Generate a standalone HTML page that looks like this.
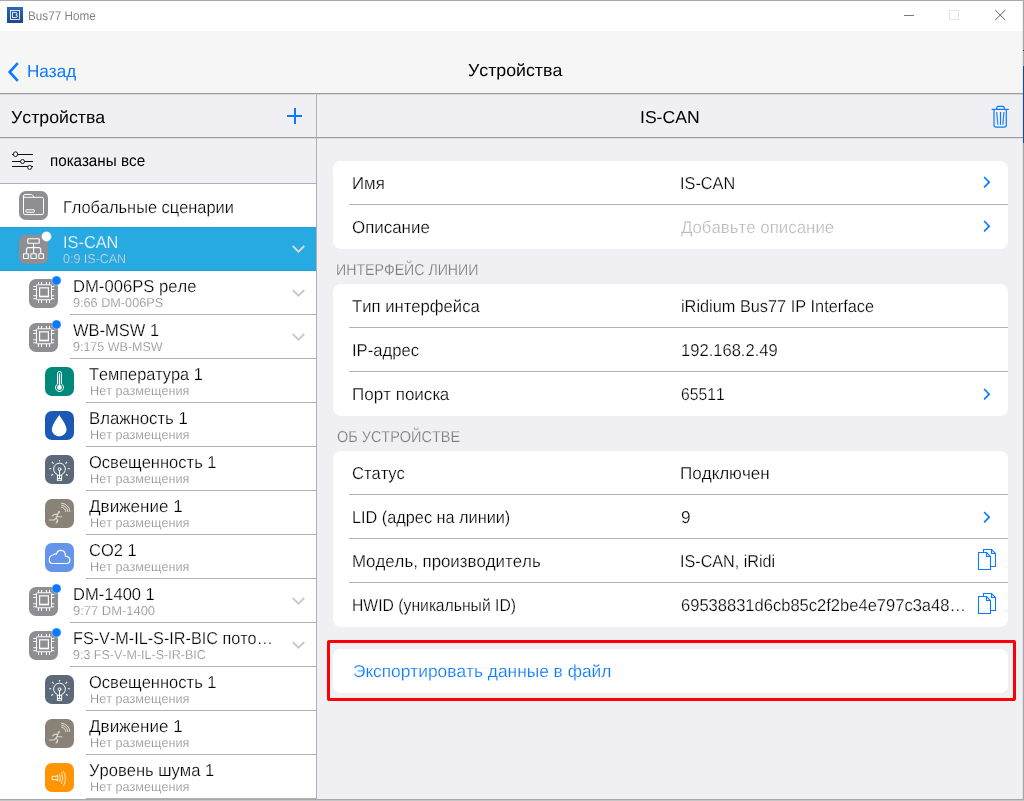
<!DOCTYPE html>
<html lang="ru"><head><meta charset="utf-8"><title>Bus77 Home</title>
<style>
html,body{margin:0;padding:0;background:#fff}
body{width:1024px;height:801px;position:relative;overflow:hidden;font-family:"Liberation Sans",sans-serif;font-kerning:none;-webkit-font-smoothing:antialiased}
.a{position:absolute;display:block}
.t{position:absolute;white-space:nowrap;font-kerning:none;font-variant-ligatures:none;line-height:20px;text-rendering:geometricPrecision;transform-origin:0 0}
.sep{height:1px;background:#b1b1b1}
.card{left:333px;width:675px;background:#fff;border-radius:8px}
</style></head><body>
<!-- window frame -->
<div class="a" style="left:0;top:0;width:1024px;height:1px;background:#a9a9a9"></div>
<div class="a" style="left:0;top:1px;width:1023px;height:30px;background:#fff"></div>
<!-- nav bar -->
<div class="a" style="left:0;top:31px;width:1023px;height:62px;background:#f6f6f6"></div>
<div class="a" style="left:0;top:93px;width:1023px;height:1px;background:#9d9d9d"></div>
<div class="a" style="left:0;top:94px;width:1023px;height:1px;background:#d6d6d8"></div>
<!-- panels -->
<div class="a" style="left:0;top:95px;width:1023px;height:704px;background:#efeff4"></div>
<div class="a" style="left:0;top:184px;width:316px;height:615px;background:#fff"></div>
<div class="a" style="left:0;top:137px;width:1023px;height:1px;background:#9c9c9c"></div>
<div class="a" style="left:0;top:138px;width:1023px;height:1px;background:#dddde0"></div>
<div class="a" style="left:0;top:183px;width:316px;height:1px;background:#b0b0b0"></div>
<div class="a" style="left:316px;top:95px;width:1px;height:704px;background:#b0b0b0"></div>
<!-- frame right/bottom -->
<div class="a" style="left:1022px;top:1px;width:1px;height:798px;background:rgba(120,120,120,0.12)"></div>
<div class="a" style="left:1023px;top:0;width:1px;height:801px;background:#a6a6a6"></div>
<div class="a" style="left:1023px;top:66px;width:1px;height:77px;background:#1d4a8c"></div>
<div class="a" style="left:1023px;top:50px;width:1px;height:1px;background:#3a3a3a"></div>
<div class="a" style="left:0;top:799px;width:1024px;height:1px;background:#a8a8a8"></div>
<div class="a" style="left:0;top:800px;width:1024px;height:1px;background:#c6c6c6"></div>
<!-- title bar -->
<svg class="a" style="left:7px;top:7px" width="16" height="16" viewBox="0 0 16 16"><defs><linearGradient id="g" x1="0" y1="0" x2="0" y2="1"><stop offset="0" stop-color="#2f66bd"/><stop offset="1" stop-color="#1d468c"/></linearGradient></defs><rect width="16" height="16" fill="url(#g)"/><rect x="3.45" y="3.45" width="9.1" height="9.1" fill="none" stroke="#fff" stroke-width="0.85"/><path d="M3.5 6V10.5" stroke="#2a5db0" stroke-width="0" /><path d="M5.5 5.5H8.6Q10 5.5 10 6.7Q10 7.9 8.8 8Q10.3 8 10.3 9.3Q10.3 10.5 8.8 10.5H5.5Z" fill="none" stroke="#fff" stroke-width="0.9"/></svg>
<svg class="a" style="left:900px;top:5px" width="112" height="22" viewBox="0 0 112 22"><path d="M4 10.5H14" stroke="#7a7a7a" stroke-width="1"/><rect x="49.5" y="5.5" width="9" height="9" fill="none" stroke="#e4e4e4" stroke-width="1"/><path d="M95.3 5.2L105.2 15M105.2 5.2L95.3 15" stroke="#5f5f5f" stroke-width="1" fill="none"/></svg>
<!-- nav back chevron -->
<svg class="a" style="left:4px;top:58px" width="20" height="28" viewBox="0 0 20 28"><path d="M13.8 5.1L5.6 14L13.8 22.9" fill="none" stroke="#0a7aff" stroke-width="2.6"/></svg>
<!-- plus -->
<div class="a" style="left:287px;top:115px;width:15px;height:2px;background:#0a7aff"></div>
<div class="a" style="left:294px;top:108px;width:2px;height:16px;background:#0a7aff"></div>
<!-- trash -->
<svg class="a" style="left:988px;top:102px" width="24" height="30" viewBox="0 0 24 30"><g fill="none" stroke="#0a7aff" stroke-width="1.2"><path d="M3.7 7.4H20.8"/><path d="M8.8 7.4V5.8Q8.8 4.3 10.3 4.3H14.8Q16.3 4.3 16.3 5.8V7.4"/><path d="M6 7.4V23Q6 25.1 8.1 25.1H16.2Q18.3 25.1 18.3 23V7.4"/><path d="M12.5 10V22.8" stroke-width="1.1"/><path d="M8.7 10L9.8 22.8M15.9 10L14.9 22.8" stroke-width="1.3" opacity="0.85"/></g></svg>
<!-- filter icon -->
<svg class="a" style="left:8px;top:148px" width="30" height="26" viewBox="0 0 30 26"><g fill="#f6f6fa" stroke="#111" stroke-width="1"><path d="M4 6.5H25M4 13.5H25M4 18.5H25"/><ellipse cx="7.5" cy="6.2" rx="2.1" ry="2.4" stroke-width="0.95"/><circle cx="14.5" cy="13.5" r="2" stroke-width="0.95"/><circle cx="21.7" cy="19.4" r="2" stroke-width="0.95"/></g></svg>
<div class="a sep" style="left:70px;top:314px;width:246px"></div>
<div class="a sep" style="left:70px;top:358px;width:246px"></div>
<div class="a sep" style="left:86px;top:402px;width:230px"></div>
<div class="a sep" style="left:86px;top:446px;width:230px"></div>
<div class="a sep" style="left:86px;top:490px;width:230px"></div>
<div class="a sep" style="left:86px;top:534px;width:230px"></div>
<div class="a sep" style="left:86px;top:578px;width:230px"></div>
<div class="a sep" style="left:70px;top:622px;width:246px"></div>
<div class="a sep" style="left:70px;top:666px;width:246px"></div>
<div class="a sep" style="left:86px;top:710px;width:230px"></div>
<div class="a sep" style="left:86px;top:754px;width:230px"></div>
<div class="a sep" style="left:86px;top:798px;width:230px"></div>
<div class="a" style="left:0;top:227px;width:316px;height:44px;background:#27a9e1;border-top:1px solid #1ba1dd;border-bottom:1px solid #1ba1dd;box-sizing:border-box"></div>
<svg class="a" style="left:19px;top:191px;overflow:visible" width="29" height="29" viewBox="0 0 29 29"><rect width="29" height="29" rx="7" ry="7" fill="#8e8e93"/><g stroke="#fff" fill="none" stroke-width="1" stroke-linejoin="round"><path d="M4.5 22.1V5q0-1.5 1.5-1.5h6.3q.8 0 1.2.7l1.5 2.1h8q1.5 0 1.5 1.5v14.3q0 1.5-1.5 1.5H6q-1.5 0-1.5-1.5z"/><path d="M4.5 6.3H15"/><rect x="6.9" y="18.75" width="8.4" height="2.5" rx="0.4"/></g></svg>
<svg class="a" style="left:19px;top:235px;overflow:visible" width="29" height="29" viewBox="0 0 29 29"><rect width="29" height="29" rx="7" ry="7" fill="#8e8e93"/><g stroke="#fff" fill="none" stroke-width="1.1" stroke-linejoin="miter"><rect x="8.8" y="3.8" width="11.4" height="4.4" rx="0.3"/><path d="M14.6 8.2V18.3M7.5 18.3V14.6q0-2 2-2H19.7q2 0 2 2V18.3"/><rect x="4.5" y="18.8" width="4.8" height="4.7" rx="0.2"/><rect x="11.8" y="18.8" width="5.5" height="4.7" rx="0.2"/><rect x="19.8" y="18.8" width="4.7" height="4.7" rx="0.2"/></g><circle cx="27.5" cy="1.5" r="4.7" fill="#fff" stroke="#fff" stroke-opacity="0.55" stroke-width="0.7"/></svg>
<svg class="a" style="left:29px;top:279px;overflow:visible" width="29" height="29" viewBox="0 0 29 29"><rect width="29" height="29" rx="7" ry="7" fill="#8e8e93"/><g stroke="#fff" fill="none" stroke-width="1"><rect x="7.5" y="5.75" width="15" height="15" rx="0.8"/><rect x="10.6" y="8.85" width="8.8" height="8.9" stroke-width="1.2"/><path d="M10.6 17.2H19.4" stroke-width="1.1"/><path d="M9.5 3V5.5M12.5 3V5.5M17.5 3V5.5M20.5 3V5.5M9.5 21V24M12.5 21V24M17.5 21V24M20.5 21V24M4.25 7.5H7.2M4.25 10.5H7.2M4.25 16.75H7.2M4.25 19.75H7.2M22.8 7.5H25.25M22.8 10.5H25.25M22.8 16.75H25.25M22.8 19.75H25.25"/></g><circle cx="27.5" cy="1.5" r="4.6" fill="#0a7aff" stroke="#fff" stroke-opacity="0.55" stroke-width="0.7"/></svg>
<svg class="a" style="left:29px;top:323px;overflow:visible" width="29" height="29" viewBox="0 0 29 29"><rect width="29" height="29" rx="7" ry="7" fill="#8e8e93"/><g stroke="#fff" fill="none" stroke-width="1"><rect x="7.5" y="5.75" width="15" height="15" rx="0.8"/><rect x="10.6" y="8.85" width="8.8" height="8.9" stroke-width="1.2"/><path d="M10.6 17.2H19.4" stroke-width="1.1"/><path d="M9.5 3V5.5M12.5 3V5.5M17.5 3V5.5M20.5 3V5.5M9.5 21V24M12.5 21V24M17.5 21V24M20.5 21V24M4.25 7.5H7.2M4.25 10.5H7.2M4.25 16.75H7.2M4.25 19.75H7.2M22.8 7.5H25.25M22.8 10.5H25.25M22.8 16.75H25.25M22.8 19.75H25.25"/></g><circle cx="27.5" cy="1.5" r="4.6" fill="#0a7aff" stroke="#fff" stroke-opacity="0.55" stroke-width="0.7"/></svg>
<svg class="a" style="left:45px;top:367px;overflow:visible" width="29" height="29" viewBox="0 0 29 29"><rect width="29" height="29" rx="7" ry="7" fill="#00897b"/><g stroke="#fff" fill="none" stroke-width="1"><path d="M12.5 17V6.5a2 2 0 0 1 4 0V17a4 4 0 1 1-4 0z"/></g><circle cx="14.5" cy="20.5" r="2.4" fill="#fff"/><path d="M14.5 7V20" stroke="#fff" stroke-width="1.3" stroke-linecap="round"/></svg>
<svg class="a" style="left:45px;top:411px;overflow:visible" width="29" height="29" viewBox="0 0 29 29"><rect width="29" height="29" rx="7" ry="7" fill="#1b59b5"/><path d="M14.2 4C14.2 4 21.6 14 21.6 18.2A7.4 7.2 0 0 1 6.8 18.2C6.8 14 14.2 4 14.2 4Z" fill="#fff"/></svg>
<svg class="a" style="left:45px;top:455px;overflow:visible" width="29" height="29" viewBox="0 0 29 29"><rect width="29" height="29" rx="7" ry="7" fill="#5b6978"/><g stroke="#fff" fill="none" stroke-width="1" stroke-linecap="round"><path d="M12.4 20.3V19.6A5.9 5.9 0 1 1 16.6 19.6V20.3"/><rect x="12.4" y="20.3" width="4.2" height="5" /><path d="M12.4 23.5H16.6"/><circle cx="14.5" cy="14.2" r="1.4"/><path d="M14.5 15.7V23"/><path d="M14.5 5V6.6M4.2 13.7H6.2M22.9 13.7H24.9M7 6.8L8.6 8.6M22.1 6.8L20.5 8.6M6.3 20.5L8.1 19.3M22.7 20.5L20.9 19.3" stroke-width="1.1" stroke-linecap="butt"/></g></svg>
<svg class="a" style="left:45px;top:499px;overflow:visible" width="29" height="29" viewBox="0 0 29 29"><rect width="29" height="29" rx="7" ry="7" fill="#8a8277"/><g stroke="#fff" fill="none" stroke-width="0.9" stroke-linecap="round" opacity="0.8"><path d="M16.6 4.3A8.2 8.2 0 0 1 24.8 12.5M16.6 6.3A6.2 6.2 0 0 1 22.8 12.5M16.6 8.3A4.2 4.2 0 0 1 20.8 12.5"/><path d="M14 12.2L12.8 15.2L11.2 19L12.6 21.2L11 24.3M12.8 15.2L9.6 15.4L7.4 17M13.2 14.5L14.6 12.8M12 17.8H16.8M11.2 19L9.2 21H4.3M12.8 21.5L12.4 23" stroke-width="1.1" opacity="0.85"/></g></svg>
<svg class="a" style="left:45px;top:543px;overflow:visible" width="29" height="29" viewBox="0 0 29 29"><rect width="29" height="29" rx="7" ry="7" fill="#6495eb"/><path stroke="#fff" fill="none" stroke-width="1.15" d="M7.7 20.5C5.6 20.5 4.3 18.7 4.3 16.5C4.3 14.1 6 12.2 8.3 12C9.2 10.9 10.4 10.7 11.3 11.1C12 8.8 13.6 7.3 15.8 7.3C18.6 7.3 20.4 9.8 20.5 13.1C23 13.4 24.9 15 24.9 17.1C24.9 19 23.5 20.5 21.7 20.5Z"/></svg>
<svg class="a" style="left:29px;top:587px;overflow:visible" width="29" height="29" viewBox="0 0 29 29"><rect width="29" height="29" rx="7" ry="7" fill="#8e8e93"/><g stroke="#fff" fill="none" stroke-width="1"><rect x="7.5" y="5.75" width="15" height="15" rx="0.8"/><rect x="10.6" y="8.85" width="8.8" height="8.9" stroke-width="1.2"/><path d="M10.6 17.2H19.4" stroke-width="1.1"/><path d="M9.5 3V5.5M12.5 3V5.5M17.5 3V5.5M20.5 3V5.5M9.5 21V24M12.5 21V24M17.5 21V24M20.5 21V24M4.25 7.5H7.2M4.25 10.5H7.2M4.25 16.75H7.2M4.25 19.75H7.2M22.8 7.5H25.25M22.8 10.5H25.25M22.8 16.75H25.25M22.8 19.75H25.25"/></g><circle cx="27.5" cy="1.5" r="4.6" fill="#0a7aff" stroke="#fff" stroke-opacity="0.55" stroke-width="0.7"/></svg>
<svg class="a" style="left:29px;top:631px;overflow:visible" width="29" height="29" viewBox="0 0 29 29"><rect width="29" height="29" rx="7" ry="7" fill="#8e8e93"/><g stroke="#fff" fill="none" stroke-width="1"><rect x="7.5" y="5.75" width="15" height="15" rx="0.8"/><rect x="10.6" y="8.85" width="8.8" height="8.9" stroke-width="1.2"/><path d="M10.6 17.2H19.4" stroke-width="1.1"/><path d="M9.5 3V5.5M12.5 3V5.5M17.5 3V5.5M20.5 3V5.5M9.5 21V24M12.5 21V24M17.5 21V24M20.5 21V24M4.25 7.5H7.2M4.25 10.5H7.2M4.25 16.75H7.2M4.25 19.75H7.2M22.8 7.5H25.25M22.8 10.5H25.25M22.8 16.75H25.25M22.8 19.75H25.25"/></g><circle cx="27.5" cy="1.5" r="4.6" fill="#0a7aff" stroke="#fff" stroke-opacity="0.55" stroke-width="0.7"/></svg>
<svg class="a" style="left:45px;top:675px;overflow:visible" width="29" height="29" viewBox="0 0 29 29"><rect width="29" height="29" rx="7" ry="7" fill="#5b6978"/><g stroke="#fff" fill="none" stroke-width="1" stroke-linecap="round"><path d="M12.4 20.3V19.6A5.9 5.9 0 1 1 16.6 19.6V20.3"/><rect x="12.4" y="20.3" width="4.2" height="5" /><path d="M12.4 23.5H16.6"/><circle cx="14.5" cy="14.2" r="1.4"/><path d="M14.5 15.7V23"/><path d="M14.5 5V6.6M4.2 13.7H6.2M22.9 13.7H24.9M7 6.8L8.6 8.6M22.1 6.8L20.5 8.6M6.3 20.5L8.1 19.3M22.7 20.5L20.9 19.3" stroke-width="1.1" stroke-linecap="butt"/></g></svg>
<svg class="a" style="left:45px;top:719px;overflow:visible" width="29" height="29" viewBox="0 0 29 29"><rect width="29" height="29" rx="7" ry="7" fill="#8a8277"/><g stroke="#fff" fill="none" stroke-width="0.9" stroke-linecap="round" opacity="0.8"><path d="M16.6 4.3A8.2 8.2 0 0 1 24.8 12.5M16.6 6.3A6.2 6.2 0 0 1 22.8 12.5M16.6 8.3A4.2 4.2 0 0 1 20.8 12.5"/><path d="M14 12.2L12.8 15.2L11.2 19L12.6 21.2L11 24.3M12.8 15.2L9.6 15.4L7.4 17M13.2 14.5L14.6 12.8M12 17.8H16.8M11.2 19L9.2 21H4.3M12.8 21.5L12.4 23" stroke-width="1.1" opacity="0.85"/></g></svg>
<svg class="a" style="left:45px;top:763px;overflow:visible" width="29" height="29" viewBox="0 0 29 29"><rect width="29" height="29" rx="7" ry="7" fill="#ff9502"/><g stroke="#fff" fill="none" stroke-width="0.9" stroke-linecap="round"><path d="M7.5 13.3H11L12.6 12.2V17.8L11 16.6H7.5Z" stroke-linejoin="round"/><path d="M14.6 11.7Q16 15 14.6 18.4M16.6 9.7Q19.2 15 16.6 20.6M18.4 8.3Q22.6 15.5 18.6 22.8" opacity="0.9"/></g></svg>
<svg class="a" style="left:290px;top:243px" width="18" height="12" viewBox="0 0 18 12"><path d="M2.7 3L8.5 8.7L14.3 3" fill="none" stroke="#dadada" stroke-width="1.8" stroke-linejoin="miter"/></svg>
<svg class="a" style="left:290px;top:287px" width="18" height="12" viewBox="0 0 18 12"><path d="M2.7 3L8.5 8.7L14.3 3" fill="none" stroke="#c8c8c8" stroke-width="1.8" stroke-linejoin="miter"/></svg>
<svg class="a" style="left:290px;top:331px" width="18" height="12" viewBox="0 0 18 12"><path d="M2.7 3L8.5 8.7L14.3 3" fill="none" stroke="#c8c8c8" stroke-width="1.8" stroke-linejoin="miter"/></svg>
<svg class="a" style="left:290px;top:595px" width="18" height="12" viewBox="0 0 18 12"><path d="M2.7 3L8.5 8.7L14.3 3" fill="none" stroke="#c8c8c8" stroke-width="1.8" stroke-linejoin="miter"/></svg>
<svg class="a" style="left:290px;top:639px" width="18" height="12" viewBox="0 0 18 12"><path d="M2.7 3L8.5 8.7L14.3 3" fill="none" stroke="#c8c8c8" stroke-width="1.8" stroke-linejoin="miter"/></svg>
<div class="a card" style="top:161px;height:88px"></div>
<div class="a sep" style="left:349px;top:204px;width:659px"></div>
<div class="a card" style="top:284px;height:132px"></div>
<div class="a sep" style="left:349px;top:327px;width:659px"></div>
<div class="a sep" style="left:349px;top:371px;width:659px"></div>
<div class="a card" style="top:451px;height:176px"></div>
<div class="a sep" style="left:349px;top:494px;width:659px"></div>
<div class="a sep" style="left:349px;top:538px;width:659px"></div>
<div class="a sep" style="left:349px;top:582px;width:659px"></div>
<div class="a card" style="top:649px;height:44px"></div>
<div class="a" style="left:327px;top:640px;width:683px;height:55px;border:3px solid #fb0007;border-radius:2px"></div>
<svg class="a" style="left:980px;top:174px" width="14" height="16" viewBox="0 0 14 16"><path d="M4.1 3L9.2 8.2L4.1 13.4" fill="none" stroke="#0a7aff" stroke-width="1.7"/></svg>
<svg class="a" style="left:980px;top:218px" width="14" height="16" viewBox="0 0 14 16"><path d="M4.1 3L9.2 8.2L4.1 13.4" fill="none" stroke="#0a7aff" stroke-width="1.7"/></svg>
<svg class="a" style="left:980px;top:386px" width="14" height="16" viewBox="0 0 14 16"><path d="M4.1 3L9.2 8.2L4.1 13.4" fill="none" stroke="#0a7aff" stroke-width="1.7"/></svg>
<svg class="a" style="left:980px;top:509px" width="14" height="16" viewBox="0 0 14 16"><path d="M4.1 3L9.2 8.2L4.1 13.4" fill="none" stroke="#0a7aff" stroke-width="1.7"/></svg>
<svg class="a" style="left:976px;top:547px" width="24" height="26" viewBox="0 0 24 26"><g fill="none" stroke="#0a7aff" stroke-width="1.1" stroke-linejoin="miter"><path d="M7.5 5.5V2.5H15.5L19.5 6.5V19.5H14.5"/><path d="M15.5 2.5V6.5H19.5"/><path d="M2.5 5.5H10.5L14.5 9.5V22.5H2.5Z" fill="#fff"/><path d="M10.5 5.5V9.5H14.5"/></g></svg>
<svg class="a" style="left:976px;top:591px" width="24" height="26" viewBox="0 0 24 26"><g fill="none" stroke="#0a7aff" stroke-width="1.1" stroke-linejoin="miter"><path d="M7.5 5.5V2.5H15.5L19.5 6.5V19.5H14.5"/><path d="M15.5 2.5V6.5H19.5"/><path d="M2.5 5.5H10.5L14.5 9.5V22.5H2.5Z" fill="#fff"/><path d="M10.5 5.5V9.5H14.5"/></g></svg>
<div class="a" style="left:0;top:0;width:1024px;height:801px;will-change:transform">
<span class="t" style="left:27.84px;top:6px;font-size:12.5px;transform:scaleX(0.9366);color:#858585">Bus77 Home</span>
<span class="t" style="left:27.05px;top:61px;font-size:17.3px;transform:scaleX(0.9896);color:#0a7aff">Назад</span>
<span class="t" style="left:467.67px;top:60px;font-size:17.3px;transform:scaleX(1.0280);color:#000">Устройства</span>
<span class="t" style="left:10.67px;top:107px;font-size:17.3px;transform:scaleX(1.0269);color:#000">Устройства</span>
<span class="t" style="left:50.49px;top:151px;font-size:16.1px;transform:scaleX(0.9471);color:#000">показаны все</span>
<span class="t" style="left:640.38px;top:107px;font-size:17.3px;transform:scaleX(1.0175);color:#000">IS-CAN</span>
<span class="t" style="left:63.40px;top:197px;font-size:17.3px;transform:scaleX(0.9479);color:#000;-webkit-text-stroke:0.25px #fff">Глобальные сценарии</span>
<span class="t" style="left:63.40px;top:232px;font-size:17.3px;transform:scaleX(0.9454);color:#fff;-webkit-text-stroke:0.25px #27a9e1">IS-CAN</span>
<span class="t" style="left:63.40px;top:249px;font-size:12.9px;transform:scaleX(0.9675);color:#d2d4d4;-webkit-text-stroke:0.2px #27a9e1">0:9 IS-CAN</span>
<span class="t" style="left:73.40px;top:276px;font-size:17.3px;transform:scaleX(0.9627);color:#000;-webkit-text-stroke:0.25px #fff">DM-006PS реле</span>
<span class="t" style="left:73.40px;top:293px;font-size:12.9px;transform:scaleX(0.9826);color:#8c8c8c;-webkit-text-stroke:0.2px #fff">9:66 DM-006PS</span>
<span class="t" style="left:73.40px;top:320px;font-size:17.3px;transform:scaleX(0.9537);color:#000;-webkit-text-stroke:0.25px #fff">WB-MSW 1</span>
<span class="t" style="left:73.40px;top:337px;font-size:12.9px;transform:scaleX(0.9695);color:#8c8c8c;-webkit-text-stroke:0.2px #fff">9:175 WB-MSW</span>
<span class="t" style="left:89.40px;top:364px;font-size:17.3px;transform:scaleX(0.9447);color:#000;-webkit-text-stroke:0.25px #fff">Температура 1</span>
<span class="t" style="left:89.70px;top:381px;font-size:12.9px;transform:scaleX(0.9806);color:#8c8c8c;-webkit-text-stroke:0.2px #fff">Нет размещения</span>
<span class="t" style="left:89.40px;top:408px;font-size:17.3px;transform:scaleX(0.9696);color:#000;-webkit-text-stroke:0.25px #fff">Влажность 1</span>
<span class="t" style="left:89.70px;top:425px;font-size:12.9px;transform:scaleX(0.9806);color:#8c8c8c;-webkit-text-stroke:0.2px #fff">Нет размещения</span>
<span class="t" style="left:89.40px;top:452px;font-size:17.3px;transform:scaleX(0.9561);color:#000;-webkit-text-stroke:0.25px #fff">Освещенность 1</span>
<span class="t" style="left:89.70px;top:469px;font-size:12.9px;transform:scaleX(0.9806);color:#8c8c8c;-webkit-text-stroke:0.2px #fff">Нет размещения</span>
<span class="t" style="left:89.40px;top:496px;font-size:17.3px;transform:scaleX(0.9885);color:#000;-webkit-text-stroke:0.25px #fff">Движение 1</span>
<span class="t" style="left:89.70px;top:513px;font-size:12.9px;transform:scaleX(0.9806);color:#8c8c8c;-webkit-text-stroke:0.2px #fff">Нет размещения</span>
<span class="t" style="left:89.40px;top:540px;font-size:17.3px;transform:scaleX(0.9531);color:#000;-webkit-text-stroke:0.25px #fff">CO2 1</span>
<span class="t" style="left:89.70px;top:557px;font-size:12.9px;transform:scaleX(0.9806);color:#8c8c8c;-webkit-text-stroke:0.2px #fff">Нет размещения</span>
<span class="t" style="left:73.40px;top:584px;font-size:17.3px;transform:scaleX(0.9571);color:#000;-webkit-text-stroke:0.25px #fff">DM-1400 1</span>
<span class="t" style="left:73.40px;top:601px;font-size:12.9px;transform:scaleX(1.0044);color:#8c8c8c;-webkit-text-stroke:0.2px #fff">9:77 DM-1400</span>
<span class="t" style="left:73.40px;top:628px;font-size:17.3px;transform:scaleX(0.9376);color:#000;-webkit-text-stroke:0.25px #fff">FS-V-M-IL-S-IR-BIC пото…</span>
<span class="t" style="left:73.40px;top:645px;font-size:12.9px;transform:scaleX(0.9703);color:#8c8c8c;-webkit-text-stroke:0.2px #fff">9:3 FS-V-M-IL-S-IR-BIC</span>
<span class="t" style="left:89.40px;top:672px;font-size:17.3px;transform:scaleX(0.9561);color:#000;-webkit-text-stroke:0.25px #fff">Освещенность 1</span>
<span class="t" style="left:89.70px;top:689px;font-size:12.9px;transform:scaleX(0.9806);color:#8c8c8c;-webkit-text-stroke:0.2px #fff">Нет размещения</span>
<span class="t" style="left:89.40px;top:716px;font-size:17.3px;transform:scaleX(0.9885);color:#000;-webkit-text-stroke:0.25px #fff">Движение 1</span>
<span class="t" style="left:89.70px;top:733px;font-size:12.9px;transform:scaleX(0.9806);color:#8c8c8c;-webkit-text-stroke:0.2px #fff">Нет размещения</span>
<span class="t" style="left:89.40px;top:760px;font-size:17.3px;transform:scaleX(0.9581);color:#000;-webkit-text-stroke:0.25px #fff">Уровень шума 1</span>
<span class="t" style="left:89.70px;top:777px;font-size:12.9px;transform:scaleX(0.9806);color:#8c8c8c;-webkit-text-stroke:0.2px #fff">Нет размещения</span>
<span class="t" style="left:352.10px;top:173px;font-size:17.3px;transform:scaleX(0.9739);color:#000;-webkit-text-stroke:0.25px #fff">Имя</span>
<span class="t" style="left:680.20px;top:173px;font-size:17.3px;transform:scaleX(0.9420);color:#000;-webkit-text-stroke:0.25px #fff">IS-CAN</span>
<span class="t" style="left:352.10px;top:217px;font-size:17.3px;transform:scaleX(0.9787);color:#000;-webkit-text-stroke:0.25px #fff">Описание</span>
<span class="t" style="left:681.38px;top:217px;font-size:17.3px;transform:scaleX(0.9757);color:#b9b9b9;-webkit-text-stroke:0.25px #fff">Добавьте описание</span>
<span class="t" style="left:336.04px;top:261px;font-size:15.8px;transform:scaleX(0.8955);color:#7d7d7d;-webkit-text-stroke:0.2px #efeff4">ИНТЕРФЕЙС ЛИНИИ</span>
<span class="t" style="left:352.10px;top:296px;font-size:17.3px;transform:scaleX(0.9647);color:#000;-webkit-text-stroke:0.25px #fff">Тип интерфейса</span>
<span class="t" style="left:680.51px;top:296px;font-size:17.3px;transform:scaleX(0.9434);color:#000;-webkit-text-stroke:0.25px #fff">iRidium Bus77 IP Interface</span>
<span class="t" style="left:352.10px;top:340px;font-size:17.3px;transform:scaleX(0.9623);color:#000;-webkit-text-stroke:0.25px #fff">IP-адрес</span>
<span class="t" style="left:681.24px;top:340px;font-size:17.3px;transform:scaleX(0.9583);color:#000;-webkit-text-stroke:0.25px #fff">192.168.2.49</span>
<span class="t" style="left:352.10px;top:384px;font-size:17.3px;transform:scaleX(0.9848);color:#000;-webkit-text-stroke:0.25px #fff">Порт поиска</span>
<span class="t" style="left:680.90px;top:384px;font-size:17.3px;transform:scaleX(0.9076);color:#000;-webkit-text-stroke:0.25px #fff">65511</span>
<span class="t" style="left:336.82px;top:428px;font-size:15.8px;transform:scaleX(0.9151);color:#7d7d7d;-webkit-text-stroke:0.2px #efeff4">ОБ УСТРОЙСТВЕ</span>
<span class="t" style="left:352.10px;top:463px;font-size:17.3px;transform:scaleX(0.9561);color:#000;-webkit-text-stroke:0.25px #fff">Статус</span>
<span class="t" style="left:680.22px;top:463px;font-size:17.3px;transform:scaleX(0.9867);color:#000;-webkit-text-stroke:0.25px #fff">Подключен</span>
<span class="t" style="left:352.10px;top:507px;font-size:17.3px;transform:scaleX(0.9413);color:#000;-webkit-text-stroke:0.25px #fff">LID (адрес на линии)</span>
<span class="t" style="left:681.09px;top:507px;font-size:17.3px;transform:scaleX(1.0000);color:#000;-webkit-text-stroke:0.25px #fff">9</span>
<span class="t" style="left:352.10px;top:551px;font-size:17.3px;transform:scaleX(0.9742);color:#000;-webkit-text-stroke:0.25px #fff">Модель, производитель</span>
<span class="t" style="left:680.21px;top:551px;font-size:17.3px;transform:scaleX(0.9351);color:#000;-webkit-text-stroke:0.25px #fff">IS-CAN, iRidi</span>
<span class="t" style="left:352.10px;top:595px;font-size:17.3px;transform:scaleX(0.9102);color:#000;-webkit-text-stroke:0.25px #fff">HWID (уникальный ID)</span>
<span class="t" style="left:680.96px;top:595px;font-size:17.3px;transform:scaleX(0.9567);color:#000;-webkit-text-stroke:0.25px #fff">69538831d6cb85c2f2be4e797c3a48…</span>
<span class="t" style="left:352.61px;top:661px;font-size:17.3px;transform:scaleX(1.0025);color:#0a7aff;-webkit-text-stroke:0.2px #fff">Экспортировать данные в файл</span>
</div>
</body></html>
